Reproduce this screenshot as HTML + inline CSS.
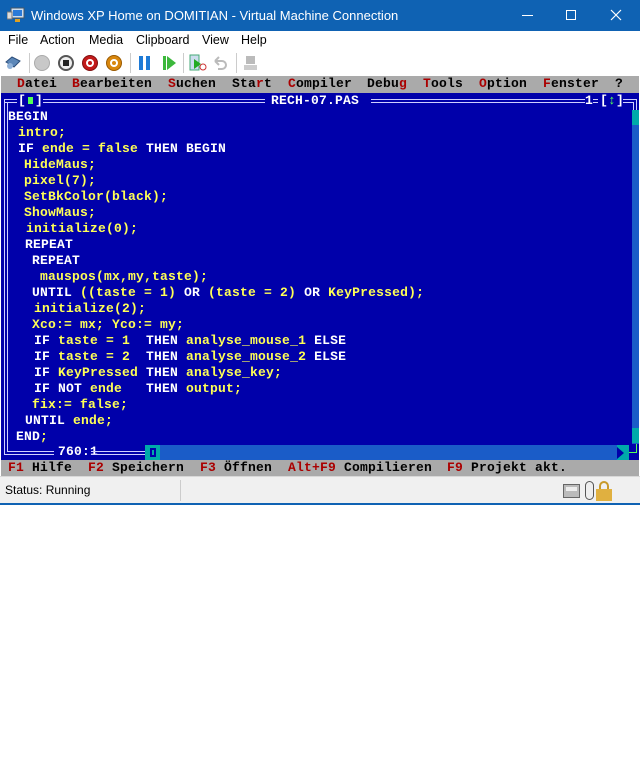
<!DOCTYPE html>
<html><head><meta charset="utf-8">
<style>
*{margin:0;padding:0;box-sizing:border-box}
body{width:640px;height:505px;overflow:hidden;background:#fff;position:relative;font-family:"Liberation Sans",sans-serif}
.a{position:absolute;white-space:pre}
#title{left:0;top:0;width:640px;height:31px;background:#0f62b3;color:#fff;font-size:13px}
#menu{left:0;top:31px;width:640px;height:19px;background:#fff;font-size:12.5px;color:#000}
#tb{left:0;top:50px;width:640px;height:26px;background:#fff}
.dos{font-family:"Liberation Mono",monospace;font-size:13px;font-weight:bold;line-height:16px;letter-spacing:0.2px}
#dmenu{left:1px;top:76px;width:638px;height:17px;background:#aaaaaa}
#ed{left:1px;top:93px;width:638px;height:367px;background:#0000aa}
#fk{left:1px;top:460px;width:638px;height:16px;background:#aaaaaa}
#st{left:0;top:476px;width:640px;height:29px;background:#f0f0f0;border-top:1px solid #d8d8d8;border-bottom:2px solid #0f62b3;font-size:12px}
.r{color:#aa0000}.k{color:#000}.w{color:#fff}.y{color:#ffff55}
.ln{position:absolute;background:#d0d0ff}
</style></head><body>
<div class="a" id="title">
 <svg class="a" style="left:7px;top:7px" width="18" height="17"><rect x="4" y="1" width="13" height="10" fill="#cde" stroke="#456" /><rect x="6" y="3" width="9" height="6" fill="#2a7ad8"/><rect x="0" y="5" width="5" height="7" fill="#ddd" stroke="#777"/><rect x="8" y="12" width="5" height="3" fill="#e0a020"/></svg>
 <span class="a" style="left:31px;top:8px">Windows XP Home on DOMITIAN - Virtual Machine Connection</span>
 <div class="a" style="left:522px;top:15px;width:11px;height:1px;background:#fff"></div>
 <div class="a" style="left:566px;top:10px;width:10px;height:10px;border:1px solid #fff"></div>
 <svg class="a" style="left:610px;top:9px" width="12" height="12"><path d="M1 1L11 11M11 1L1 11" stroke="#fff" stroke-width="1.2"/></svg>
</div>
<div class="a" id="menu">
 <span class="a" style="left:8px;top:2px">File</span><span class="a" style="left:40px;top:2px">Action</span><span class="a" style="left:89px;top:2px">Media</span><span class="a" style="left:136px;top:2px">Clipboard</span><span class="a" style="left:202px;top:2px">View</span><span class="a" style="left:241px;top:2px">Help</span>
</div>
<div class="a" id="tb">
 <svg class="a" style="left:4px;top:4px" width="18" height="18"><path d="M2 8l6-5 8 4-6 6z" fill="#5c87b8" stroke="#2b4d7a"/><circle cx="6" cy="12" r="3" fill="#8fb1d8"/></svg>
 <div class="a" style="left:29px;top:3px;width:1px;height:20px;background:#ccc"></div>
 <div class="a" style="left:34px;top:5px;width:16px;height:16px;border-radius:50%;background:#c8c8c8;border:1px solid #aaa"></div>
 <div class="a" style="left:58px;top:5px;width:16px;height:16px;border-radius:50%;background:#eee;border:2px solid #555"><div style="margin:3px;width:6px;height:6px;background:#222"></div></div>
 <div class="a" style="left:82px;top:5px;width:16px;height:16px;border-radius:50%;background:#c21a1a;border:1px solid #801010"><div style="margin:3px;width:8px;height:8px;border:2px solid #fff;border-radius:50%"></div></div>
 <div class="a" style="left:106px;top:5px;width:16px;height:16px;border-radius:50%;background:#d8870e;border:1px solid #9a5a00"><div style="margin:3px;width:8px;height:8px;border:2px solid #fff;border-radius:50%"></div></div>
 <div class="a" style="left:130px;top:3px;width:1px;height:20px;background:#ccc"></div>
 <div class="a" style="left:139px;top:6px;width:4px;height:14px;background:#1e7ad6"></div><div class="a" style="left:146px;top:6px;width:4px;height:14px;background:#1e7ad6"></div>
 <div class="a" style="left:163px;top:6px;width:3px;height:14px;background:#3cb83c"></div>
 <svg class="a" style="left:167px;top:6px" width="10" height="14"><path d="M0 0L9 7L0 14z" fill="#3cb83c"/></svg>
 <div class="a" style="left:183px;top:3px;width:1px;height:20px;background:#ccc"></div>
 <svg class="a" style="left:189px;top:4px" width="18" height="18"><rect x="1" y="1" width="9" height="15" fill="#cde" stroke="#4a7"/><path d="M5 5l7 5-7 5z" fill="#2a2"/><circle cx="14" cy="13" r="3" fill="none" stroke="#c33"/></svg>
 <svg class="a" style="left:212px;top:5px" width="16" height="16"><path d="M3 6h7a4 4 0 010 8H6M3 6l4-4M3 6l4 4" fill="none" stroke="#bbb" stroke-width="2"/></svg>
 <div class="a" style="left:236px;top:3px;width:1px;height:20px;background:#ccc"></div>
 <svg class="a" style="left:243px;top:4px" width="16" height="18"><rect x="3" y="2" width="9" height="8" fill="#bbb"/><rect x="1" y="11" width="13" height="5" fill="#ccc"/></svg>
</div>
<div class="a dos" id="dmenu">
 <span class="a k" style="left:16px;top:0"><span class="r">D</span>atei</span>
 <span class="a k" style="left:71px;top:0"><span class="r">B</span>earbeiten</span>
 <span class="a k" style="left:167px;top:0"><span class="r">S</span>uchen</span>
 <span class="a k" style="left:231px;top:0">Sta<span class="r">r</span>t</span>
 <span class="a k" style="left:287px;top:0"><span class="r">C</span>ompiler</span>
 <span class="a k" style="left:366px;top:0">Debu<span class="r">g</span></span>
 <span class="a k" style="left:422px;top:0"><span class="r">T</span>ools</span>
 <span class="a k" style="left:478px;top:0"><span class="r">O</span>ption</span>
 <span class="a k" style="left:542px;top:0"><span class="r">F</span>enster</span>
 <span class="a k" style="left:614px;top:0">?</span>
</div>
<div class="a dos" id="ed">
 <div class="ln" style="left:4px;top:6px;width:12px;height:1px"></div><div class="ln" style="left:4px;top:9px;width:12px;height:1px"></div>
 <span class="a w" style="left:17px;top:0">[</span><div class="a" style="left:27px;top:4px;width:5px;height:7px;background:#55ff55"></div><span class="a w" style="left:34px;top:0">]</span>
 <div class="ln" style="left:42px;top:6px;width:222px;height:1px"></div><div class="ln" style="left:42px;top:9px;width:222px;height:1px"></div>
 <span class="a w" style="left:270px;top:0">RECH-07.PAS</span>
 <div class="ln" style="left:370px;top:6px;width:214px;height:1px"></div><div class="ln" style="left:370px;top:9px;width:214px;height:1px"></div>
 <span class="a w" style="left:584px;top:0">1</span>
 <div class="ln" style="left:592px;top:6px;width:5px;height:1px"></div><div class="ln" style="left:592px;top:9px;width:5px;height:1px"></div>
 <span class="a w" style="left:599px;top:0">[</span><span class="a" style="left:607px;top:0;color:#55ff55">↕</span><span class="a w" style="left:615px;top:0">]</span>
 <div class="ln" style="left:622px;top:6px;width:14px;height:1px"></div><div class="ln" style="left:622px;top:9px;width:10px;height:1px"></div>
 <div class="ln" style="left:632px;top:9px;width:1px;height:8px"></div><div class="ln" style="left:635px;top:6px;width:1px;height:11px"></div>
 <div class="ln" style="left:3px;top:6px;width:1px;height:356px"></div><div class="ln" style="left:6px;top:9px;width:1px;height:350px"></div>
 <div class="ln" style="left:3px;top:361px;width:50px;height:1px"></div><div class="ln" style="left:6px;top:358px;width:47px;height:1px"></div>
 <span class="a w" style="left:57px;top:351px">760:1</span>
 <div class="ln" style="left:90px;top:358px;width:54px;height:1px"></div><div class="ln" style="left:90px;top:361px;width:54px;height:1px"></div>
 <div class="a" style="left:144px;top:352px;width:484px;height:15px;background:#1a5cc8"></div>
 <div class="a" style="left:144px;top:352px;width:15px;height:15px;background:#00aaaa"><div style="margin:3px 0 0 5px;width:6px;height:9px;border:2px solid #0000aa"></div></div>
 <div class="a" style="left:616px;top:352px;width:12px;height:15px;background:#00aaaa"><svg width="8" height="12" style="margin:2px 0 0 0"><path d="M0 0L7 6L0 12z" fill="#0000aa"/></svg></div>
 <div class="a" style="left:628px;top:359px;width:8px;height:1px;background:#55ff55"></div><div class="a" style="left:635px;top:351px;width:1px;height:9px;background:#55ff55"></div>
 <div class="a" style="left:631px;top:17px;width:7px;height:334px;background:#1a5cc8"></div>
 <div class="a" style="left:631px;top:17px;width:7px;height:15px;background:#00aaaa"></div>
 <div class="a" style="left:631px;top:335px;width:7px;height:15px;background:#00aaaa"></div>
 <span class="a w" style="left:7px;top:16px">BEGIN</span>
 <span class="a y" style="left:17px;top:32px">intro;</span>
 <span class="a w" style="left:17px;top:48px">IF <span class="y">ende = false</span> THEN BEGIN</span>
 <span class="a y" style="left:23px;top:64px">HideMaus;</span>
 <span class="a y" style="left:23px;top:80px">pixel(7);</span>
 <span class="a y" style="left:23px;top:96px">SetBkColor(black);</span>
 <span class="a y" style="left:23px;top:112px">ShowMaus;</span>
 <span class="a y" style="left:25px;top:128px">initialize(0);</span>
 <span class="a w" style="left:24px;top:144px">REPEAT</span>
 <span class="a w" style="left:31px;top:160px">REPEAT</span>
 <span class="a y" style="left:39px;top:176px">mauspos(mx,my,taste);</span>
 <span class="a w" style="left:31px;top:192px">UNTIL <span class="y">((taste = 1)</span> OR <span class="y">(taste = 2)</span> OR <span class="y">KeyPressed);</span></span>
 <span class="a y" style="left:33px;top:208px">initialize(2);</span>
 <span class="a y" style="left:31px;top:224px">Xco:= mx; Yco:= my;</span>
 <span class="a w" style="left:33px;top:240px">IF <span class="y">taste = 1 </span> THEN <span class="y">analyse_mouse_1</span> ELSE</span>
 <span class="a w" style="left:33px;top:256px">IF <span class="y">taste = 2 </span> THEN <span class="y">analyse_mouse_2</span> ELSE</span>
 <span class="a w" style="left:33px;top:272px">IF <span class="y">KeyPressed</span> THEN <span class="y">analyse_key;</span></span>
 <span class="a w" style="left:33px;top:288px">IF NOT <span class="y">ende  </span> THEN <span class="y">output;</span></span>
 <span class="a y" style="left:31px;top:304px">fix:= false;</span>
 <span class="a w" style="left:24px;top:320px">UNTIL <span class="y">ende;</span></span>
 <span class="a w" style="left:15px;top:336px">END<span class="y">;</span></span>
</div>
<div class="a dos" id="fk">
 <span class="a k" style="left:7px;top:0"><span class="r">F1</span> Hilfe</span>
 <span class="a k" style="left:87px;top:0"><span class="r">F2</span> Speichern</span>
 <span class="a k" style="left:199px;top:0"><span class="r">F3</span> Öffnen</span>
 <span class="a k" style="left:287px;top:0"><span class="r">Alt+F9</span> Compilieren</span>
 <span class="a k" style="left:446px;top:0"><span class="r">F9</span> Projekt akt.</span>
</div>
<div class="a" id="st">
 <span class="a" style="left:5px;top:6px">Status: Running</span>
 <div class="a" style="left:180px;top:3px;width:1px;height:21px;background:#ccc"></div>
 <div class="a" style="left:563px;top:7px;width:17px;height:14px;background:#bbb;border:1px solid #666"><div style="margin:2px;height:4px;background:#eee"></div></div>
 <div class="a" style="left:585px;top:4px;width:9px;height:19px;border:1px solid #555;border-radius:5px;background:#eee"></div>
 <div class="a" style="left:599px;top:4px;width:10px;height:9px;border:2px solid #c89a2a;border-bottom:none;border-radius:5px 5px 0 0"></div>
 <div class="a" style="left:596px;top:12px;width:16px;height:12px;background:#e0b040"></div>
</div>
</body></html>
